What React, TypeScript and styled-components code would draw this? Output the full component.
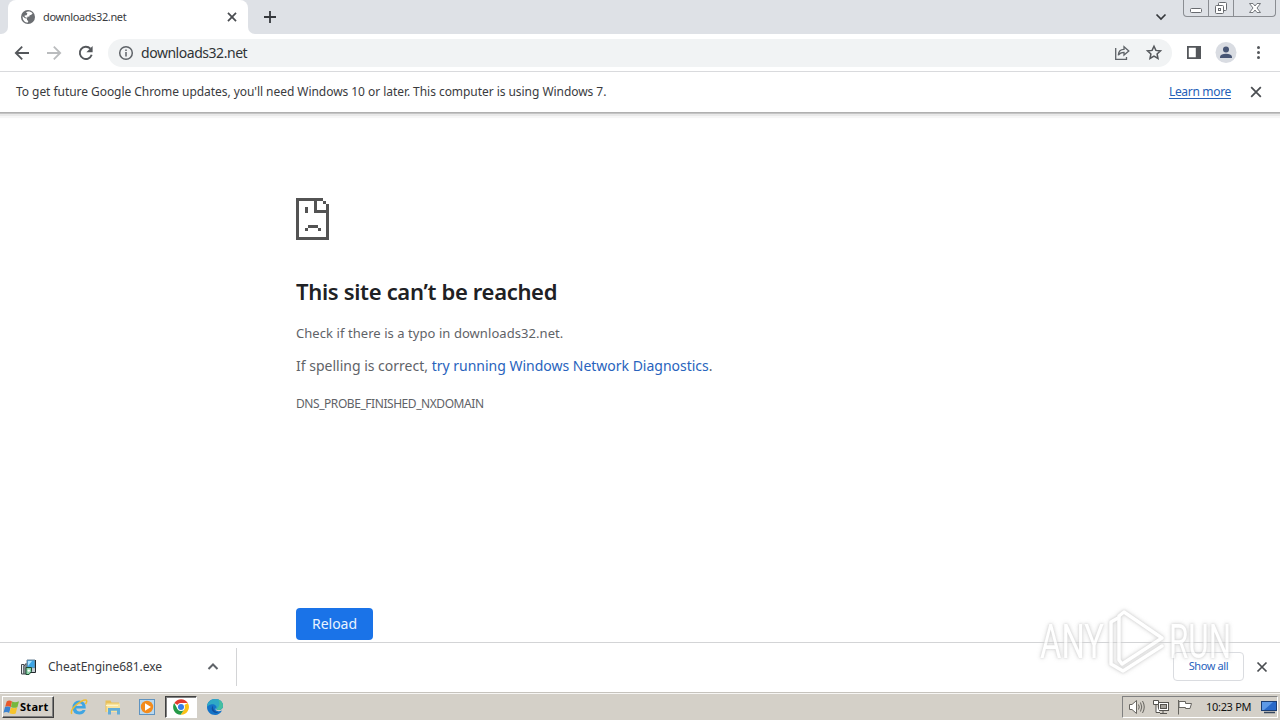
import React from 'react';
import styled, { createGlobalStyle } from 'styled-components';

const Global = createGlobalStyle`
  * { box-sizing: border-box; }
  body { margin: 0; overflow: hidden; background: #fff; }
  svg { display: block; flex: none; }
`;

const Screen = styled.div`
  width: 1280px;
  height: 720px;
  position: relative;
  display: flex;
  flex-direction: column;
  background: #fff;
  color: #303134;
  font-family: "Noto Sans", "Open Sans", sans-serif;
`;

const Label = styled.span<{ $size: number; $spacing?: number; $color?: string; $weight?: number }>`
  white-space: nowrap;
  font-size: ${p => p.$size}px;
  line-height: 18px;
  letter-spacing: ${p => p.$spacing ?? 0}px;
  color: ${p => p.$color ?? '#3a3b3e'};
  font-weight: ${p => p.$weight ?? 400};
`;

const TabStrip = styled.div`
  height: 34px;
  display: flex;
`;

const StripEdge = styled.div`
  width: 8px;
  background: #fff;
  &::before {
    content: "";
    display: block;
    height: 34px;
    background: #dee1e6;
    border-bottom-right-radius: 7px;
  }
`;

const TabSlot = styled.div`
  background: #dee1e6;
`;

const Tab = styled.div`
  width: 240px;
  height: 34px;
  padding: 0 9px 0 12px;
  display: flex;
  align-items: center;
  border-radius: 8px 8px 0 0;
  background: #fff;
  gap: 7px;
  & > :last-child { margin-left: auto; }
`;

const StripRest = styled.div`
  flex: 1;
  display: flex;
  background: #dee1e6;
  border-bottom-left-radius: 7px;
`;

const NewTab = styled.div`
  flex: 1;
  padding: 10px 0 0 15px;
`;

const TabSearch = styled.div`
  padding: 12px 16px 0 0;
`;

const WindowControls = styled.div`
  display: flex;
  width: 93px;
  height: 17px;
  margin-right: 4px;
  border: 1px solid #8a8d92;
  border-top: 0;
  border-radius: 0 0 4px 4px;
`;

const Control = styled.div<{ $width: number }>`
  width: ${p => p.$width}px;
  display: flex;
  align-items: center;
  justify-content: center;
  & + & { border-left: 1px solid #8a8d92; }
`;

const Toolbar = styled.div`
  height: 38px;
  display: flex;
  align-items: center;
  padding: 0 12px 0 13px;
  border-bottom: 1px solid #d9dadd;
`;

const NavButtons = styled.div`
  display: flex;
  gap: 14px;
  width: 95px;
`;

const AddressBar = styled.div`
  width: 1064px;
  height: 28px;
  border-radius: 14px;
  background: #f1f3f4;
  display: flex;
  align-items: center;
  padding: 0 9px 0 10px;
  gap: 7px;
`;

const AddressActions = styled.div`
  display: flex;
  gap: 14px;
  margin-left: auto;
`;

const ToolbarActions = styled.div`
  display: flex;
  align-items: center;
  gap: 11px;
  margin-left: 13px;
  & > :nth-child(2) { margin-left: 1px; }
`;

const InfoBar = styled.div`
  height: 41px;
  display: flex;
  align-items: center;
  justify-content: space-between;
  padding: 0 17px 0 16px;
  border-bottom: 1px solid #b0b0b0;
  box-shadow: 0 1px 0 #c4c4c4, 0 3px 0 #e9e9e9, 0 5px 1px #f6f6f6;
`;

const InfoActions = styled.div`
  display: flex;
  align-items: center;
  gap: 18px;
`;

const Underlined = styled(Label)`
  text-decoration: underline;
  text-underline-offset: 2px;
`;

const Page = styled.main`
  height: 529px;
  padding: 85px 0 0 296px;
  display: flex;
  flex-direction: column;
  align-items: flex-start;
`;

const Title = styled.h1`
  margin: 36px 0 0;
  font-size: 22px;
  line-height: 30px;
  font-weight: 600;
  letter-spacing: -0.33px;
  color: #202124;
  white-space: nowrap;
`;

const Line = styled.p<{ $gap: number }>`
  margin: ${p => p.$gap}px 0 0;
  height: 18px;
  line-height: 18px;
  display: flex;
`;

const ReloadButton = styled.button`
  width: 77px;
  height: 32px;
  margin-top: 195px;
  padding: 0;
  border: 0;
  border-radius: 4px;
  background: #1a73e8;
  font-family: inherit;
`;

const DownloadShelf = styled.div`
  height: 50px;
  border-top: 1px solid #d3d4d6;
  display: flex;
  align-items: center;
  background: #fff;
  padding-bottom: 1px;
`;

const DownloadItem = styled.div`
  width: 237px;
  height: 38px;
  border-right: 1px solid #d3d4d6;
  display: flex;
  align-items: center;
  padding: 0 16px 0 20px;
  gap: 11px;
  & > :last-child { margin-left: auto; }
`;

const ShelfActions = styled.div`
  margin-left: auto;
  display: flex;
  align-items: center;
  gap: 12px;
  padding-right: 12px;
`;

const ShowAll = styled.div`
  width: 71px;
  height: 29px;
  margin-bottom: 1px;
  border: 1px solid #dadce0;
  border-radius: 4px;
  display: flex;
  align-items: center;
  justify-content: center;
  padding-bottom: 1px;
`;

const Taskbar = styled.div`
  height: 28px;
  background: #d4d0c8;
  border-top: 1px solid #c6c3bd;
  box-shadow: inset 0 1px 0 #f7f6f4;
  display: flex;
  align-items: flex-start;
  padding: 3px 2px 0 2px;
`;

const StartButton = styled.div`
  width: 52px;
  height: 22px;
  border: 1px solid;
  border-color: #fff #404040 #404040 #fff;
  box-shadow: inset -1px -1px 0 #808080;
  display: flex;
  align-items: center;
`;

const TaskIcons = styled.div`
  display: flex;
  align-items: center;
  margin-left: 8px;
`;

const TaskSlot = styled.div<{ $active?: boolean }>`
  width: ${p => (p.$active ? 32 : 34)}px;
  height: 22px;
  margin: 0 ${p => (p.$active ? 1 : 0)}px;
  display: flex;
  align-items: center;
  justify-content: center;
  border: 1px solid;
  border-color: ${p => (p.$active ? '#404040 #fff #fff #404040' : 'transparent')};
  box-shadow: ${p => (p.$active ? 'inset 1px 1px 0 #808080' : 'none')};
  background: ${p => (p.$active ? '#fff' : 'transparent')};
`;

const Tray = styled.div`
  width: 156px;
  height: 22px;
  margin-left: auto;
  border: 1px solid;
  border-color: #808080 #fff #fff #808080;
  display: flex;
  align-items: center;
  padding-left: 6px;
`;

const TrayIcons = styled.div`
  display: flex;
  gap: 8px;
  width: 77px;
`;

const TrayScreen = styled.div`
  margin-left: auto;
`;

const Watermark = styled.div`
  position: absolute;
  left: 1034px;
  top: 604px;
  pointer-events: none;
  opacity: 0.75;
  filter: drop-shadow(0 0 1px #c4c4c4) drop-shadow(0 0 2px #d2d2d2);
  svg { overflow: visible; }
`;

const Cross = ({ size = 16, color = '#4a4d51', reach = 4.5, width = 1.8 }) => (
  <svg width={size} height={size} viewBox="-8 -8 16 16" stroke={color} strokeWidth={width}>
    <path d={`M${-reach} ${-reach}L${reach} ${reach}M${reach} ${-reach}L${-reach} ${reach}`} />
  </svg>
);

const Globe = () => (
  <svg width="16" height="16" viewBox="0 0 16 16">
    <circle cx="8" cy="8" r="7" fill="#6b6e72" />
    <path d="M2.6 7.2 5 9.2 7 9.4 7 11 8.2 12 8 13.6C4.8 13.6 2.4 11 2.6 7.2ZM6 3.2C7.8 2 11 2.4 12.6 4.4L11 6 9.6 6.2 9.4 7.6 7.2 7.8 7.4 9 4.8 8 4.6 6.6 6.6 6.2 7.4 4.4Z" fill="#fff" />
  </svg>
);

const Back = ({ color, flip }: { color: string; flip?: boolean }) => (
  <svg width="18" height="18" viewBox="0 0 18 18" fill="none" stroke={color} strokeWidth="1.8" transform={flip ? 'scale(-1 1)' : undefined}>
    <path d="M16 9H3M9.2 2.6 2.8 9l6.4 6.4" />
  </svg>
);

const ReloadIcon = () => (
  <svg width="18" height="18" viewBox="0 0 18 18">
    <path d="M13.4 4.7A6.1 6.1 0 1 0 14.7 10.8" fill="none" stroke="#54575b" strokeWidth="1.9" />
    <path d="M15.6 2v6.2H9.4Z" fill="#54575b" />
  </svg>
);

const SadPage = () => (
  <svg width="33" height="42" viewBox="0 0 33 42" fill="#535353" shapeRendering="crispEdges">
    <path d="M0 0H27V3H3V39H30V15H18V3H21V12H30V6H33V42H0ZM27 3H30V6H27Z" />
    <path d="M9 9H12V15H9ZM12 27H22V30H12ZM9 30H12V33H9ZM22 30H25V33H22Z" />
  </svg>
);

const Installer = () => (
  <svg width="17" height="17" viewBox="0 0 17 17">
    <path d="M7 1H15V9H7Z" fill="#3da5e6" stroke="#6b8296" />
    <path d="M8 2H12L8 7Z" fill="#a9e2ff" />
    <path d="M15.5 1V13.5H10" fill="none" stroke="#22272c" />
    <path d="M9 9.5H15V13H9Z" fill="#c4cdd4" />
    <path d="M1.5 5.5H4V15H1.5Z" fill="#e9edf0" stroke="#41474c" />
    <path d="M4 7 6 4.5V15H4Z" fill="#c5cdd3" stroke="#41474c" />
    <path d="M6 8.5H11.5V12.5L9 15.5H6Z" fill="#8ed5aa" stroke="#1d4c33" />
    <circle cx="8.8" cy="11.6" r="1.2" fill="#fff" />
  </svg>
);

const StartLogo = () => (
  <svg width="17" height="17" viewBox="0 0 17 17">
    <path d="M3.7 2.4Q6.2.7 9 2.4L7.8 8Q5 6.5 2.2 7.8Z" fill="#e9592b" />
    <path d="M9.2 2.5Q12 4.2 16 2.2L14.4 8.2Q11.5 9.6 8 8Z" fill="#76b83e" />
    <path d="M2 8Q4.7 6.7 7.6 8.2L6.2 14.1Q3.5 12.3.5 13.8Z" fill="#3b83d0" />
    <path d="M7.9 8.4Q11 10 14.2 8.5L12.7 14.4Q9.7 15.8 6.4 14.3Z" fill="#f6c42c" />
  </svg>
);

const Explorer = () => (
  <svg width="18" height="18" viewBox="0 0 18 18" fill="none">
    <path d="M15.8 10.4H6.2Q6.6 13.4 9.6 13.4 11.8 13.4 12.7 12H15.6Q13.8 16.6 9.4 16.6 2.4 16 2.4 9.5 2.8 2.8 9.3 2.4 16 2.8 15.8 10.4Z" fill="#3fa5e2" />
    <path d="M6.2 8H12.4Q11.9 5.3 9.3 5.3 6.7 5.3 6.2 8Z" fill="#d4d0c8" />
    <path d="M1.8 15.8Q0 12.5 6 7 13.5 1 16.4 2.2 17.4 3.3 15.5 6.2" stroke="#efbd30" strokeWidth="1.5" />
  </svg>
);

const Folder = () => (
  <svg width="18" height="18" viewBox="0 0 18 18">
    <path d="M1.5 2.5H6.5L7.5 4.5H15V14H1.5Z" fill="#e8bf59" />
    <path d="M2.5 5.5H16V14H2.5Z" fill="#f8e39c" />
    <path d="M4 10H16V16.5H13V12.8H7V16.5H4Z" fill="#63add8" />
    <path d="M2 7.5H14" stroke="#fff5c9" />
  </svg>
);

const Media = () => (
  <svg width="18" height="18" viewBox="0 0 18 18">
    <rect x="1.5" y="1.5" width="15" height="15" fill="#b9d8ef" stroke="#5f93c0" />
    <circle cx="9" cy="9" r="6.2" fill="#f38b1c" />
    <path d="M7 5.3 13 9 7 12.7Z" fill="#fff" />
  </svg>
);

const Chrome = () => (
  <svg width="16" height="16" viewBox="0 0 48 48">
    <path d="M24 24 4 12A23.5 23.5 0 0 1 44.4 12H24Z" fill="#e33b2e" />
    <path d="M24 24 44.4 12A23.5 23.5 0 0 1 23 47.5L34.4 30Z" fill="#fbc116" />
    <path d="M24 24 13.6 30 3.6 12A23.5 23.5 0 0 0 23 47.5L34.4 30Z" fill="#269a48" />
    <circle cx="24" cy="24" r="11.7" fill="#fff" />
    <circle cx="24" cy="24" r="9" fill="#377de8" />
  </svg>
);

const Edge = () => (
  <svg width="18" height="18" viewBox="0 0 18 18">
    <path d="M1 9C1 4 4.7 1 9.2 1 14 1 17 4.2 17 7.9 17 10.4 15.2 12 12.8 12 10.8 12 9.8 11.2 10.3 10 8.5 11 10 14.6 16 12.6 14.5 15.7 12 17 9.2 17 4.5 17 1 13.5 1 9Z" fill="#1473c8" />
    <path d="M1 8.8C1.2 3.8 4.9 1 9.3 1 14 1 17 4.3 17 7.8 17 10.5 15 12 12.7 12 10.7 12 9.8 11.2 10.3 10 11.2 7.5 8 5.5 4.9 6.4 2.6 7 1.5 8 1 8.8Z" fill="#2fa9c5" />
    <path d="M12 1.5C15.2 2.5 17 5 17 7.8 17 10.5 15 12 12.7 12 11.8 12 11 11.6 10.6 11 13.5 8.5 14.5 5 12 1.5Z" fill="#45bfa0" />
    <path d="M6 12.5Q5.2 9.5 7 7.6 6.2 13.5 12.6 14.6 9 16.2 6 12.5Z" fill="#124f9c" />
  </svg>
);

const NAV = '#54575b';

export default function App() {
  return (
    <Screen>
      <Global />
      <TabStrip>
        <StripEdge />
        <TabSlot>
          <Tab>
            <Globe />
            <Label $size={11} $spacing={-0.37}>downloads32.net</Label>
            <Cross size={14} reach={4.6} width={2} />
          </Tab>
        </TabSlot>
        <StripRest>
          <NewTab>
            <svg width="14" height="14" viewBox="0 0 14 14" stroke="#35383c" strokeWidth="1.8"><path d="M1 7H13M7 1V13" /></svg>
          </NewTab>
          <TabSearch>
            <svg width="12" height="10" viewBox="0 0 12 10" fill="none" stroke="#35383c" strokeWidth="1.7"><path d="m1.5 2.5 4.5 4.5 4.5-4.5" /></svg>
          </TabSearch>
          <WindowControls>
            <Control $width={24}>
              <svg width="14" height="17" viewBox="0 0 14 17"><rect x="1.5" y="8.5" width="11" height="4" rx="1" fill="#fff" stroke="#686b70" /></svg>
            </Control>
            <Control $width={25}>
              <svg width="14" height="17" viewBox="0 0 14 17" fill="#fff" stroke="#686b70"><rect x="4.5" y="2.5" width="8" height="8" rx="1" /><rect x="1.5" y="5.5" width="8" height="8" rx="1" /><rect x="4.5" y="8.5" width="2" height="2" /></svg>
            </Control>
            <Control $width={42}>
              <svg width="14" height="17" viewBox="0 0 14 17" fill="#fff" stroke="#686b70" strokeWidth=".9"><path d="M1.5 3.5H5L7 6 9 3.5H12.5L9 8 12.5 12.5H9L7 10 5 12.5H1.5L5 8Z" /></svg>
            </Control>
          </WindowControls>
        </StripRest>
      </TabStrip>

      <Toolbar>
        <NavButtons>
          <Back color={NAV} />
          <Back color="#babcbe" flip />
          <ReloadIcon />
        </NavButtons>
        <AddressBar>
          <svg width="16" height="16" viewBox="0 0 16 16" fill="none" stroke="#5f6368" strokeWidth="1.5"><circle cx="8" cy="8" r="6.3" /><path d="M8 7V11.5M8 4.4V6" /></svg>
          <Label $size={14} $spacing={-0.46} $color="#303336">downloads32.net</Label>
          <AddressActions>
            <svg width="18" height="18" viewBox="0 0 18 18" fill="none" stroke="#5f6368" strokeWidth="1.3"><path d="M2.7 4V15.3H13.5V13" /><path d="M5.3 11.2C5.6 7.3 8 5.4 11 5.4V2.7L15.8 7 11 11V8.3C8.4 8.3 6.6 9.1 5.3 11.2Z" /></svg>
            <svg width="18" height="18" viewBox="0 0 18 18" fill="none" stroke="#54575b" strokeWidth="1.5"><path d="m9 2.2 1.9 4.2 4.6.5-3.4 3.1.9 4.5-4-2.3-4 2.3.9-4.5-3.4-3.1 4.6-.5Z" /></svg>
          </AddressActions>
        </AddressBar>
        <ToolbarActions>
          <svg width="18" height="18" viewBox="0 0 18 18"><path fill={NAV} fillRule="evenodd" d="M2 2H16V15H2ZM3.8 3.8V13.2H10.8V3.8Z" /></svg>
          <svg width="22" height="22" viewBox="0 0 22 22"><circle cx="11" cy="10.5" r="10.5" fill="#d9dce2" /><circle cx="11" cy="7.5" r="3" fill="#475574" /><path d="M5 16V14.5Q6 11.7 11 11.7T17 14.5V16Z" fill="#475574" /></svg>
          <svg width="18" height="18" viewBox="0 0 18 18" fill={NAV}><circle cx="10.5" cy="3.5" r="1.5" /><circle cx="10.5" cy="8.5" r="1.5" /><circle cx="10.5" cy="13.5" r="1.5" /></svg>
        </ToolbarActions>
      </Toolbar>

      <InfoBar>
        <Label $size={12} $spacing={-0.05}>To get future Google Chrome updates, you'll need Windows 10 or later. This computer is using Windows 7.</Label>
        <InfoActions>
          <Underlined $size={12} $spacing={-0.32} $color="#2560b8">Learn more</Underlined>
          <Cross size={14} reach={5.5} width={2} />
        </InfoActions>
      </InfoBar>

      <Page>
        <SadPage />
        <Title>This site can’t be reached</Title>
        <Line $gap={18}><Label $size={13} $spacing={0.06} $color="#5f6368">Check if there is a typo in downloads32.net.</Label></Line>
        <Line $gap={15}>
          <Label $size={14} $color="#5f6368">If spelling is correct,&nbsp;</Label>
          <Label $size={14} $spacing={-0.01} $color="#2863bd">try running Windows Network Diagnostics</Label>
          <Label $size={14} $color="#5f6368">.</Label>
        </Line>
        <Line $gap={20}><Label $size={12} $spacing={-0.44} $color="#5f6368">DNS_PROBE_FINISHED_NXDOMAIN</Label></Line>
        <ReloadButton><Label $size={14} $color="#e9f3ff">Reload</Label></ReloadButton>
      </Page>

      <DownloadShelf>
        <DownloadItem>
          <Installer />
          <Label $size={12} $spacing={-0.04}>CheatEngine681.exe</Label>
          <svg width="14" height="10" viewBox="0 0 14 10" fill="none" stroke="#5f6368" strokeWidth="2"><path d="m2.5 7 4.5-4.5L11.5 7" /></svg>
        </DownloadItem>
        <ShelfActions>
          <ShowAll><Label $size={11} $spacing={-0.38} $color="#2863bd">Show all</Label></ShowAll>
          <Cross size={12} reach={6} width={2.3} />
        </ShelfActions>
      </DownloadShelf>

      <Taskbar>
        <StartButton>
          <StartLogo />
          <Label $size={11} $spacing={0.3} $color="#000" $weight={700}>Start</Label>
        </StartButton>
        <TaskIcons>
          <TaskSlot><Explorer /></TaskSlot>
          <TaskSlot><Folder /></TaskSlot>
          <TaskSlot><Media /></TaskSlot>
          <TaskSlot $active><Chrome /></TaskSlot>
          <TaskSlot><Edge /></TaskSlot>
        </TaskIcons>
        <Tray>
          <TrayIcons>
            <svg width="16" height="16" viewBox="0 0 16 16" fill="#fff" stroke="#66645f"><path d="M.5 5.5H3L7.5 1.5V14.5L3 10.5H.5Z" /><path d="M9.5 5.5Q11 8 9.5 10.5M11.5 3.5Q14 8 11.5 12.5M13.5 2Q17 8 13.5 14" fill="none" /></svg>
            <svg width="16" height="16" viewBox="0 0 16 16" fill="#fff" stroke="#55534f"><rect x="5.5" y="3.5" width="10" height="8" /><rect x="7.5" y="5.5" width="6" height="4" fill="#a5a29c" /><path d="M.5 1.5H5.5V5.5H.5ZM3 5.5V13.5H7M7 14.5H14M10 12V14" /></svg>
            <svg width="16" height="16" viewBox="0 0 16 16" fill="#fff" stroke="#66645f"><path d="M1.5 1V15.5M2 2.5H8.5V4.5H14.5L13 9.5H8.5V8.5H2Z" /></svg>
          </TrayIcons>
          <Label $size={11} $spacing={-0.3} $color="#111">10:23 PM</Label>
          <TrayScreen>
            <svg width="16" height="14" viewBox="0 0 16 14"><rect y="1" width="16" height="10" fill="#1a3d73" /><rect x="1" y="2" width="14" height="8" fill="#2869c9" /><path d="M1 2H12L3 10H1Z" fill="#5d99e6" /><path d="M3 12.5H14" stroke="#35465e" strokeWidth="1.5" /></svg>
          </TrayScreen>
        </Tray>
      </Taskbar>

      <Watermark>
        <svg width="206" height="76" viewBox="0 0 206 76" fill="none" stroke="#fff" strokeWidth="3.5" strokeLinejoin="round" strokeLinecap="round">
          <g fill="#fff" stroke="none" fontFamily="Roboto, sans-serif" fontSize="48">
            <text x="6" y="54" textLength="64" lengthAdjust="spacingAndGlyphs">ANY</text>
            <text x="135" y="54" textLength="62" lengthAdjust="spacingAndGlyphs">RUN</text>
          </g>
          <path d="M84 14 77 18V60L89 67 128 42" />
          <path d="M85 56V12L90 8 128 34 88 60Z" />
        </svg>
      </Watermark>
    </Screen>
  );
}
